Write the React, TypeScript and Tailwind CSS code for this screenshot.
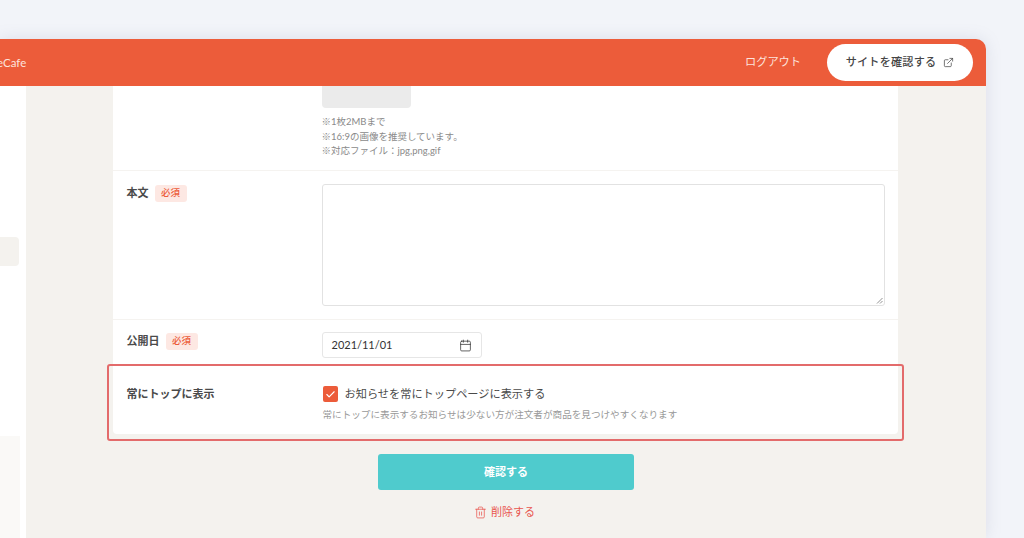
import { Calendar, Check, ExternalLink, Trash2 } from "lucide-react";

const font = { fontFamily: 'Lato, "Noto Sans CJK JP", sans-serif' };

function Required() {
  return (
    <span className="flex h-[17px] w-[32px] items-center justify-center rounded-[3px] bg-[#fde8e3] text-[9.5px] font-medium text-[#ec5c3a]">
      必須
    </span>
  );
}

export default function App() {
  return (
    <div style={font} className="h-[538px] w-[1024px] overflow-hidden bg-[#f2f4f9] pt-[39px] pr-[38px]">
      <div className="flex h-[499px] flex-col overflow-hidden rounded-tr-[10px] shadow-[0_0_16px_rgba(120,130,160,0.18)]">
        <header className="flex h-[47px] shrink-0 items-center justify-between bg-[#ec5c3a] pr-[13px]">
          <span className="ml-[-3px] text-[11.5px] text-[#fde3dc]">eCafe</span>
          <div className="flex items-center gap-[26px]">
            <span className="text-[11.2px] text-[#fde3dc]">ログアウト</span>
            <button
              type="button"
              className="flex h-[37px] w-[146px] items-center justify-center gap-[7px] rounded-full bg-white text-[11.1px] font-medium tracking-[0.02em] text-[#454545]"
            >
              サイトを確認する
              <ExternalLink size={11} strokeWidth={1.6} />
            </button>
          </div>
        </header>

        <div className="flex min-h-0 flex-1">
          <aside className="flex w-[26px] shrink-0 flex-col bg-white">
            <div className="mt-[151px] h-[29px] w-[19px] rounded-r-[4px] bg-[#f4f2ee]" />
            <div className="mt-[170px] h-[102px] w-[20px] bg-[#faf9f7]" />
          </aside>

          <main className="flex flex-1 flex-col items-center bg-[#f4f2ee] pr-[1px]">
            <section className="ml-[-1px] w-[785px] rounded-b-[4px] bg-white text-[#4a4a4a]">
              <div className="flex h-[85px] border-b border-[#f5f3f0] pl-[209px]">
                <div>
                  <div className="h-[22px] w-[89px] rounded-b-[4px] bg-[#ebebeb]" />
                  <div className="mt-[7px] text-[9.5px] leading-[14.5px] text-[#8a8a8a]">
                    <p>※1枚2MBまで</p>
                    <p>※16:9の画像を推奨しています。</p>
                    <p>※対応ファイル：jpg,png,gif</p>
                  </div>
                </div>
              </div>

              <div className="flex h-[149px] border-b border-[#f5f3f0] pt-[13px]">
                <div className="mt-[1px] flex h-[17px] w-[209px] shrink-0 items-center gap-[6px] pl-[14px] text-[11px] font-bold">
                  本文
                  <Required />
                </div>
                <div className="relative h-[122px] w-[563px] rounded-[3px] border border-[#e2e2e2]">
                  <svg className="absolute right-[1px] bottom-[1px]" width="7" height="7" viewBox="0 0 7 7" stroke="#777" strokeWidth="0.8">
                    <path d="M1 6.5 6.5 1M4 6.5 6.5 4" />
                  </svg>
                </div>
              </div>

              <div className="flex h-[44px] pt-[12px]">
                <div className="mt-[1px] flex h-[17px] w-[209px] shrink-0 items-center gap-[6px] pl-[14px] text-[11px] font-bold">
                  公開日
                  <Required />
                </div>
                <div className="flex h-[26px] w-[160px] items-center justify-between rounded-[3px] border border-[#e6e6e6] pr-[9px] pl-[9px] text-[11px] text-[#333]">
                  2021/11/01
                  <Calendar size={13} strokeWidth={1.4} />
                </div>
              </div>

              <div className="relative flex h-[70px]">
                <div className="absolute top-0 -right-[6px] -bottom-[7px] -left-[6px] rounded-[3px] border-2 border-[#e36b6b]" />
                <div className="w-[209px] shrink-0 pt-[22px] pl-[14px] text-[11px] leading-[16px] font-bold">常にトップに表示</div>
                <div className="pt-[22px]">
                  <div className="flex h-[16px] items-center gap-[7px] pl-[1px] text-[11.2px] text-[#4a4a4a]">
                    <span className="flex h-[16px] w-[15px] items-center justify-center rounded-[2px] bg-[#ec5c3a] text-white">
                      <Check size={11} strokeWidth={2.4} />
                    </span>
                    お知らせを常にトップページに表示する
                  </div>
                  <p className="mt-[7px] pl-[1px] text-[9.6px] leading-[12px] text-[#999]">
                    常にトップに表示するお知らせは少ない方が注文者が商品を見つけやすくなります
                  </p>
                </div>
              </div>
            </section>

            <button
              type="button"
              className="mt-[20px] ml-[1px] h-[36px] w-[256px] shrink-0 rounded-[3px] bg-[#4fcbcd] text-[11px] font-bold text-white"
            >
              確認する
            </button>
            <div className="mt-[14px] ml-[-2px] flex items-center gap-[4px] text-[11px] text-[#e9564f]">
              <Trash2 size={13} strokeWidth={1.4} />
              削除する
            </div>
          </main>
        </div>
      </div>
    </div>
  );
}
